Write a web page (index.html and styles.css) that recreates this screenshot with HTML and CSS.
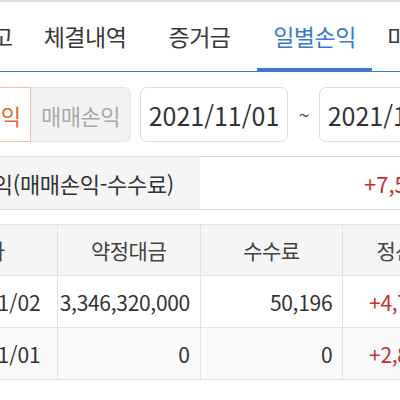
FILE: index.html
```html
<!DOCTYPE html>
<html lang="ko">
<head>
<meta charset="utf-8">
<link rel="stylesheet" href="styles.css">
</head>
<body>
<div class="topline"></div>
<div class="page">
  <nav class="tabs">
    <div class="tab w1">잔고</div>
    <div class="tab w2">체결내역</div>
    <div class="tab w3">증거금</div>
    <div class="tab w4 active">일별손익</div>
    <div class="tab w5">미결제</div>
  </nav>
  <div class="filters">
    <div class="seg">
      <div class="seg-btn on">실현손익</div>
      <div class="seg-btn">매매손익</div>
    </div>
    <div class="date">2021/11/01</div>
    <span class="tilde">~</span>
    <div class="date">2021/11/30</div>
  </div>
  <div class="summary">
    <div class="sum-label">실현손익(매매손익-수수료)</div>
    <div class="sum-value">+7,569,608</div>
  </div>
  <table class="grid">
    <thead>
      <tr><th>일자</th><th>약정대금</th><th>수수료</th><th>정산손익</th></tr>
    </thead>
    <tbody>
      <tr><td class="c">2021/11/02</td><td class="r">3,346,320,000</td><td class="r">50,196</td><td class="r red">+4,754,608</td></tr>
      <tr class="alt"><td class="c">2021/11/01</td><td class="r">0</td><td class="r">0</td><td class="r red">+2,815,000</td></tr>
    </tbody>
  </table>
</div>
</body>
</html>
```
FILE: styles.css
```css
html, body {
  margin: 0;
  padding: 0;
  background: #fff;
}
body {
  width: 400px;
  height: 400px;
  overflow: hidden;
  font-family: "Noto Sans CJK KR", "Noto Sans", sans-serif;
  color: #333;
}
.topline {
  height: 2px;
  background: #dcdcdc;
}
.page {
  margin-left: -86px;
  width: 572px;
}
.tabs {
  display: flex;
  height: 70px;
  box-sizing: border-box;
  border-bottom: 1px solid #3b7bc9;
  padding-left: 42px;
}
.tab {
  display: flex;
  align-items: center;
  justify-content: center;
  padding-bottom: 1px;
  box-sizing: border-box;
  font-size: 23px;
  letter-spacing: -0.5px;
  color: #383838;
  white-space: nowrap;
  flex: none;
}
.w1 { width: 72px; }
.w2 { width: 114px; }
.w3 { width: 115px; }
.w4 { width: 115px; }
.w5 { width: 92px; }
.tab.active {
  color: #3b7bc9;
  box-shadow: inset 0 -3px 0 #3b7bc9;
}
.filters {
  display: flex;
  align-items: center;
  margin-top: 15px;
  padding-left: 17px;
  height: 55px;
}
.seg {
  display: flex;
}
.seg-btn {
  width: 100px;
  height: 55px;
  box-sizing: border-box;
  display: flex;
  align-items: center;
  justify-content: center;
  font-size: 22px;
  letter-spacing: -0.5px;
  background: #f2f2f2;
  color: #a9a9a9;
  border: 1px solid #e4e4e4;
  border-left: none;
  border-radius: 0 7px 7px 0;
}
.seg-btn.on {
  background: #fff;
  color: #d46a32;
  border: 1px solid #ecc2a6;
  border-radius: 7px 0 0 7px;
}
.date {
  width: 148px;
  height: 55px;
  box-sizing: border-box;
  margin-left: 9px;
  border: 1px solid #dcdcdc;
  border-radius: 7px;
  display: flex;
  align-items: center;
  justify-content: center;
  font-size: 25px;
  color: #333;
}
.tilde {
  width: 24px;
  margin-left: 4px;
  margin-right: -6px;
  text-align: center;
  font-size: 20px;
  color: #555;
}
.summary {
  display: flex;
  height: 54px;
  box-sizing: border-box;
  margin-top: 14px;
  border-top: 1px solid #dddddd;
  border-bottom: 1px solid #dddddd;
}
.sum-label {
  width: 286px;
  background: #f5f5f5;
  display: flex;
  align-items: center;
  justify-content: flex-end;
  padding-right: 26px;
  box-sizing: border-box;
  white-space: nowrap;
  font-size: 22px;
  letter-spacing: -0.3px;
  color: #333;
}
.sum-value {
  flex: 1;
  display: flex;
  align-items: center;
  justify-content: flex-end;
  padding-right: 12px;
  font-size: 22px;
  color: #c3302f;
}
.grid {
  margin-top: 14px;
  border-collapse: collapse;
  width: 572px;
  table-layout: fixed;
  font-size: 21px;
}
.grid th, .grid td {
  border: 1px solid #e3e3e3;
  padding: 0 10px;
  white-space: nowrap;
  overflow: hidden;
}
.grid th {
  height: 50px;
  background: #f5f5f5;
  font-weight: normal;
  font-size: 21px;
  color: #444;
  letter-spacing: -0.5px;
}
.grid td {
  height: 51px;
  color: #333;
}
.grid tr.alt td {
  background: #fafafa;
}
.grid td.c { text-align: center; }
.grid td.r {
  text-align: right;
  padding-left: 2px;
  letter-spacing: -0.3px;
}
.grid td.red {
  color: #c3302f;
  padding-right: 14px;
}
```
